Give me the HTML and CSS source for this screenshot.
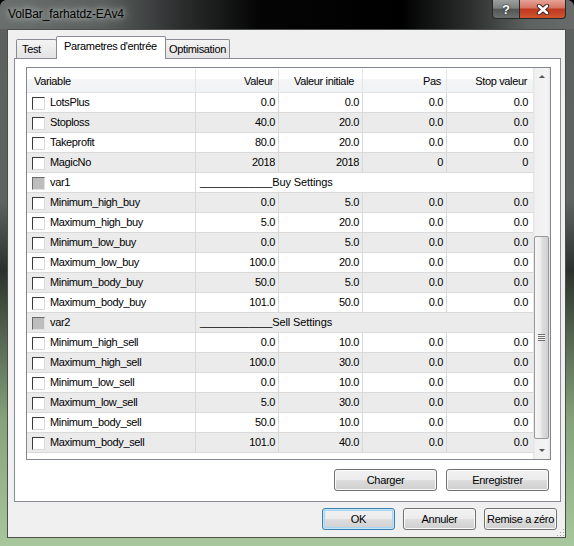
FILE: index.html
```html
<!DOCTYPE html>
<html lang="fr">
<head>
    <meta charset="UTF-8">
    <title>VolBar_farhatdz-EAv4</title>
    <link rel="stylesheet" href="styles.css">
</head>
<body>

<div class="window">
    <div class="titlebar">
        <span class="title">VolBar_farhatdz-EAv4</span>
        <div class="caption">
            <span class="cap-btn help">?</span>
            <span class="cap-btn close">
                <svg width="14" height="11" viewBox="0 0 14 11">
                    <path d="M3 2 L11 9 M11 2 L3 9" stroke="#3a2420" stroke-width="4.4" stroke-linecap="round" fill="none"/>
                    <path d="M3 2 L11 9 M11 2 L3 9" stroke="#ffffff" stroke-width="2.6" stroke-linecap="round" fill="none"/>
                </svg>
            </span>
        </div>
    </div>

    <div class="client">
        <div class="tabs">
            <div class="tab tab-test">Test</div>
            <div class="tab tab-params active">Parametres d'entrée</div>
            <div class="tab tab-optim">Optimisation</div>
        </div>

        <div class="panel">
            <div class="listview">
                <div class="grid">
                    <div class="row head">
                        <div class="cell left">Variable</div>
                        <div class="cell">Valeur</div>
                        <div class="cell">Valeur initiale</div>
                        <div class="cell">Pas</div>
                        <div class="cell">Stop valeur</div>
                    </div>
                    <div class="row">
                        <div class="cell name"><span class="cb"></span>LotsPlus</div>
                        <div class="cell">0.0</div><div class="cell">0.0</div><div class="cell">0.0</div><div class="cell">0.0</div>
                    </div>
                    <div class="row">
                        <div class="cell name"><span class="cb"></span>Stoploss</div>
                        <div class="cell">40.0</div><div class="cell">20.0</div><div class="cell">0.0</div><div class="cell">0.0</div>
                    </div>
                    <div class="row">
                        <div class="cell name"><span class="cb"></span>Takeprofit</div>
                        <div class="cell">80.0</div><div class="cell">20.0</div><div class="cell">0.0</div><div class="cell">0.0</div>
                    </div>
                    <div class="row">
                        <div class="cell name"><span class="cb"></span>MagicNo</div>
                        <div class="cell">2018</div><div class="cell">2018</div><div class="cell">0</div><div class="cell">0</div>
                    </div>
                    <div class="row">
                        <div class="cell name"><span class="cb off"></span>var1</div>
                        <div class="cell span">____________Buy Settings</div>
                    </div>
                    <div class="row">
                        <div class="cell name"><span class="cb"></span>Minimum_high_buy</div>
                        <div class="cell">0.0</div><div class="cell">5.0</div><div class="cell">0.0</div><div class="cell">0.0</div>
                    </div>
                    <div class="row">
                        <div class="cell name"><span class="cb"></span>Maximum_high_buy</div>
                        <div class="cell">5.0</div><div class="cell">20.0</div><div class="cell">0.0</div><div class="cell">0.0</div>
                    </div>
                    <div class="row">
                        <div class="cell name"><span class="cb"></span>Minimum_low_buy</div>
                        <div class="cell">0.0</div><div class="cell">5.0</div><div class="cell">0.0</div><div class="cell">0.0</div>
                    </div>
                    <div class="row">
                        <div class="cell name"><span class="cb"></span>Maximum_low_buy</div>
                        <div class="cell">100.0</div><div class="cell">20.0</div><div class="cell">0.0</div><div class="cell">0.0</div>
                    </div>
                    <div class="row">
                        <div class="cell name"><span class="cb"></span>Minimum_body_buy</div>
                        <div class="cell">50.0</div><div class="cell">5.0</div><div class="cell">0.0</div><div class="cell">0.0</div>
                    </div>
                    <div class="row">
                        <div class="cell name"><span class="cb"></span>Maximum_body_buy</div>
                        <div class="cell">101.0</div><div class="cell">50.0</div><div class="cell">0.0</div><div class="cell">0.0</div>
                    </div>
                    <div class="row">
                        <div class="cell name"><span class="cb off"></span>var2</div>
                        <div class="cell span">____________Sell Settings</div>
                    </div>
                    <div class="row">
                        <div class="cell name"><span class="cb"></span>Minimum_high_sell</div>
                        <div class="cell">0.0</div><div class="cell">10.0</div><div class="cell">0.0</div><div class="cell">0.0</div>
                    </div>
                    <div class="row">
                        <div class="cell name"><span class="cb"></span>Maximum_high_sell</div>
                        <div class="cell">100.0</div><div class="cell">30.0</div><div class="cell">0.0</div><div class="cell">0.0</div>
                    </div>
                    <div class="row">
                        <div class="cell name"><span class="cb"></span>Minimum_low_sell</div>
                        <div class="cell">0.0</div><div class="cell">10.0</div><div class="cell">0.0</div><div class="cell">0.0</div>
                    </div>
                    <div class="row">
                        <div class="cell name"><span class="cb"></span>Maximum_low_sell</div>
                        <div class="cell">5.0</div><div class="cell">30.0</div><div class="cell">0.0</div><div class="cell">0.0</div>
                    </div>
                    <div class="row">
                        <div class="cell name"><span class="cb"></span>Minimum_body_sell</div>
                        <div class="cell">50.0</div><div class="cell">10.0</div><div class="cell">0.0</div><div class="cell">0.0</div>
                    </div>
                    <div class="row">
                        <div class="cell name"><span class="cb"></span>Maximum_body_sell</div>
                        <div class="cell">101.0</div><div class="cell">40.0</div><div class="cell">0.0</div><div class="cell">0.0</div>
                    </div>
                </div>

                <div class="vscroll">
                    <div class="sb-btn"><span class="arrow up"></span></div>
                    <div class="sb-track">
                        <div class="thumb"><span class="grip-lines"></span></div>
                    </div>
                    <div class="sb-btn"><span class="arrow down"></span></div>
                </div>
            </div>

            <div class="panel-buttons">
                <button class="btn wide">Charger</button>
                <button class="btn wide">Enregistrer</button>
            </div>
        </div>

        <div class="dialog-buttons">
            <button class="btn default">OK</button>
            <button class="btn">Annuler</button>
            <button class="btn">Remise a zéro</button>
        </div>

        <span class="size-grip"></span>
    </div>
</div>

</body>
</html>
```

FILE: styles.css
```css
body {
    margin: 0;
    padding: 0;
    font-family: "Liberation Sans", Arial, sans-serif;
    font-size: 11px;
    background: #000;
}

.window {
    width: 574px;
    height: 546px;
    display: flex;
    flex-direction: column;
    overflow: hidden;
    border-radius: 7px 7px 0 0;
    background: linear-gradient(180deg, #5b605f 0px, #5f6463 200px, #2c302e 270px, #3e4a3c 300px, #86a27c 420px, #a9c79c 546px);
}

/* title bar */
.titlebar {
    height: 29px;
    flex-shrink: 0;
    display: flex;
    align-items: flex-start;
    padding-left: 8px;
    background: linear-gradient(90deg, #6a6f6e 0%, #5a5f5e 18%, #2a2c2c 32%, #050505 45%, #000000 70%, #2c2f2e 82%, #5d6261 92%, #676c6b 100%);
}

.title {
    margin-top: 7px;
    font-size: 12px;
    line-height: 15px;
    letter-spacing: -0.1px;
    color: #000;
    text-shadow: 0 0 5px #b9bebd, 0 0 9px #a6abaa, 0 0 14px #9ba09f;
}

.caption {
    display: flex;
    margin-left: auto;
    margin-right: 8px;
}

.cap-btn {
    height: 19px;
    box-sizing: border-box;
    display: flex;
    align-items: center;
    justify-content: center;
    border: 1px solid #262828;
    border-top: none;
    color: #fff;
}

.help {
    width: 27px;
    border-right: none;
    border-radius: 0 0 0 4px;
    font-weight: bold;
    font-size: 13px;
    text-shadow: 0 0 2px #222, 0 0 1px #222;
    background: linear-gradient(180deg, #9a9f9e 0%, #7c8180 45%, #535857 52%, #6b706f 100%);
}

.close {
    width: 47px;
    border-radius: 0 0 4px 0;
    background: linear-gradient(180deg, #e7a397 0%, #d67665 42%, #c13a1f 52%, #d0542f 100%);
}

/* client area */
.client {
    position: relative;
    height: 509px;
    width: 559px;
    box-sizing: border-box;
    margin-left: 7px;
    border: 1px solid #4a5049;
    background: #f0f0f0;
}

.tabs {
    position: relative;
    z-index: 1;
    display: flex;
    align-items: flex-end;
    height: 22px;
    margin: 6px 0 0 8px;
}

.tab {
    height: 19px;
    box-sizing: border-box;
    border: 1px solid #898c95;
    border-bottom: none;
    border-radius: 2px 2px 0 0;
    background: linear-gradient(180deg, #f4f4f4 0%, #ebebeb 50%, #e3e3e3 100%);
    line-height: 18px;
    color: #000;
    letter-spacing: -0.35px;
}

.tab-test {
    width: 41px;
    padding-left: 5px;
}

.tab-params {
    width: 110px;
    padding-left: 7px;
    margin-left: -1px;
}

.tab-optim {
    width: 65px;
    padding-left: 3px;
    margin-left: -1px;
}

.tab.active {
    height: 23px;
    margin-bottom: -1px;
    background: #fff;
    line-height: 19px;
    position: relative;
}

.panel {
    margin-left: 6px;
    width: 547px;
    height: 444px;
    box-sizing: border-box;
    border: 1px solid #898c95;
    background: #fff;
    padding: 8px 9px 0 11px;
}

/* list view */
.listview {
    display: flex;
    width: 525px;
    height: 393px;
    box-sizing: border-box;
    border: 1px solid #828790;
    background: #fff;
}

.grid {
    width: 506px;
}

.row {
    display: grid;
    grid-template-columns: 169px 83px 84px 84px 86px;
    height: 20px;
    box-sizing: border-box;
    border-bottom: 1px solid #d9d9d9;
    line-height: 19px;
    letter-spacing: -0.35px;
    color: #000;
}

.row:nth-child(odd) {
    background: #ebebeb;
}

.row.head {
    height: 25px;
    line-height: 25px;
    padding-top: 1px;
    border-bottom-color: #e2e2e2;
    background: linear-gradient(180deg, #ffffff 0%, #ffffff 45%, #f4f5f6 46%, #f1f2f3 100%);
}

.cell {
    box-sizing: border-box;
    border-right: 1px solid #d9d9d9;
    text-align: right;
    padding-right: 3px;
    white-space: nowrap;
    overflow: hidden;
}

.row .cell:last-child {
    border-right: none;
    padding-right: 5px;
}

.head .cell {
    border-right-color: #e5e5e5;
    padding-right: 5px;
}

.head .cell:nth-child(3) {
    padding-right: 8px;
}

.head .cell:last-child {
    padding-right: 6px;
}

.cell.left {
    text-align: left;
    padding-left: 7px;
}

.cell.name {
    display: flex;
    align-items: center;
    text-align: left;
    padding-left: 5px;
}

.cell.span {
    grid-column: 2 / span 4;
    text-align: left;
    padding-left: 4px;
    letter-spacing: -0.1px;
}

.cb {
    width: 13px;
    height: 13px;
    box-sizing: border-box;
    flex-shrink: 0;
    margin: 1px 5px 0 0;
    border: 1px solid;
    border-color: #3a3a3a #dadada #dadada #3a3a3a;
    background: #fff;
}

.cb.off {
    background: #bdbdbd;
    border-color: #6a6a6a #e2e2e2 #e2e2e2 #6a6a6a;
}

/* scrollbar */
.vscroll {
    width: 17px;
    display: flex;
    flex-direction: column;
    background: linear-gradient(90deg, #e3e3e3 0%, #f1f1f1 15%, #f3f3f3 85%, #e6e6e6 100%);
}

.sb-btn {
    height: 17px;
    display: flex;
    align-items: center;
    justify-content: center;
}

.arrow {
    width: 0;
    height: 0;
    border-left: 3px solid transparent;
    border-right: 3px solid transparent;
}

.arrow.up {
    border-bottom: 3px solid #555;
}

.arrow.down {
    border-top: 3px solid #555;
}

.sb-track {
    flex: 1;
    padding: 0 1px;
}

.thumb {
    margin-top: 151px;
    height: 203px;
    box-sizing: border-box;
    border: 1px solid #999;
    border-radius: 2px;
    background: linear-gradient(90deg, #f6f6f6 0%, #ececec 45%, #dedede 55%, #d0d0d0 100%);
    display: flex;
    align-items: center;
    justify-content: center;
}

.grip-lines {
    width: 7px;
    height: 7px;
    background: repeating-linear-gradient(180deg, #6e6e6e 0, #6e6e6e 1px, #f4f4f4 1px, #f4f4f4 2px);
}

/* buttons */
.btn {
    height: 22px;
    width: 73px;
    box-sizing: border-box;
    border: 1px solid #707070;
    border-radius: 3px;
    padding: 0;
    font-family: "Liberation Sans", Arial, sans-serif;
    font-size: 11px;
    letter-spacing: -0.3px;
    color: #000;
    background: linear-gradient(180deg, #f2f2f2 0%, #ebebeb 50%, #dddddd 51%, #cfcfcf 100%);
    box-shadow: inset 0 0 0 1px #fbfbfb;
}

.btn.wide {
    width: 103px;
}

.btn.default {
    border-color: #3c7fb1;
    box-shadow: inset 0 0 0 1px #c5e6f8, inset 0 0 0 2px #a6d6f2;
}

.panel-buttons {
    display: flex;
    justify-content: flex-end;
    gap: 9px;
    margin: 9px 2px 0 0;
}

.dialog-buttons {
    display: flex;
    justify-content: flex-end;
    gap: 8px;
    margin: 6px 8px 0 0;
}

.size-grip {
    position: absolute;
    right: 1px;
    bottom: 1px;
    width: 8px;
    height: 8px;
    background: radial-gradient(circle, #a0a0a0 0.8px, transparent 1px) 0 0 / 3px 3px;
    clip-path: polygon(100% 0, 100% 100%, 0 100%);
}
```
